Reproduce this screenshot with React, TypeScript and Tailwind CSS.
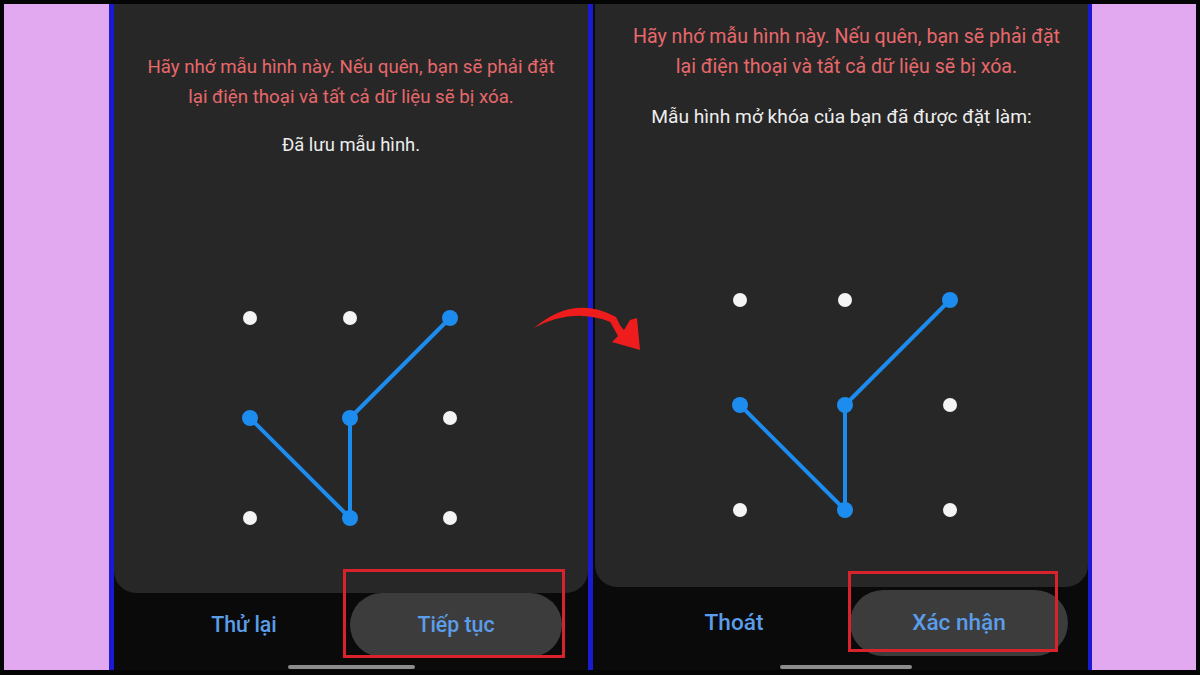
import React from "react";

type Pt = [number, number];

const FONT = { fontFamily: "Roboto, 'Noto Sans', Arial, sans-serif" };

function Pattern({ gap, size }: { gap: number; size: number }) {
  const o = 20;
  const pos = (c: number, r: number): Pt => [o + c * gap, o + r * gap];
  const path: Pt[] = [pos(0, 1), pos(1, 2), pos(1, 1), pos(2, 0)];
  const active = ["0-1", "1-2", "1-1", "2-0"];
  const dots: { key: string; p: Pt; on: boolean }[] = [];
  for (let r = 0; r < 3; r++) {
    for (let c = 0; c < 3; c++) {
      dots.push({ key: `${c}-${r}`, p: pos(c, r), on: active.includes(`${c}-${r}`) });
    }
  }
  return (
    <svg width={size} height={size} viewBox={`0 0 ${size} ${size}`}>
      <polyline
        points={path.map((p) => p.join(",")).join(" ")}
        fill="none"
        stroke="#1c8cef"
        strokeWidth={4}
        strokeLinejoin="round"
      />
      {dots.map((d) => (
        <circle
          key={d.key}
          cx={d.p[0]}
          cy={d.p[1]}
          r={d.on ? 8 : 7}
          fill={d.on ? "#1c8cef" : "#f4f4f4"}
        />
      ))}
    </svg>
  );
}

function HomeBar({ width, offset }: { width: string; offset: string }) {
  return (
    <div className={`flex justify-center ${offset}`}>
      <div className={`${width} h-[4px] rounded-full bg-[#8c8c8c]`} />
    </div>
  );
}

export default function App() {
  return (
    <div
      className="relative flex w-[1200px] h-[675px] overflow-hidden bg-[#050505] pt-[4px] pb-[5px] px-[4px]"
      style={FONT}
    >
      {/* left margin */}
      <div className="w-[105px] bg-[#e2a9f0]" />
      <div className="w-[5px] bg-[#1a1ad0]" />

      {/* left phone */}
      <div className="w-[474px] flex flex-col bg-[#0a0a0a]">
        <div className="h-[589px] rounded-b-[22px] bg-[#272727] flex flex-col items-center pt-[48px]">
          <p className="text-[18.7px] leading-[30px] text-[#e8686b] text-center">
            Hãy nhớ mẫu hình này. Nếu quên, bạn sẽ phải đặt
            <br />
            lại điện thoại và tất cả dữ liệu sẽ bị xóa.
          </p>
          <p className="mt-[18px] text-[18.4px] leading-[30px] text-[#ededed]">Đã lưu mẫu hình.</p>
          <div className="mt-[138px] mr-[3px]">
            <Pattern gap={100} size={240} />
          </div>
        </div>
        <div className="flex items-center h-[64px]">
          <div className="w-[236px] pl-[24px] flex justify-center">
            <span className="text-[21.3px] font-medium text-[#5b9de8]">Thử lại</span>
          </div>
          <div className="w-[212px] h-[64px] rounded-full bg-[#3c3c3c] flex items-center justify-center">
            <span className="text-[21.3px] font-medium text-[#5b9de8]">Tiếp tục</span>
          </div>
        </div>
        <div className="mt-[8px]">
          <HomeBar width="w-[127px]" offset="pl-0" />
        </div>
      </div>

      <div className="w-[5px] bg-[#1a1ad0]" />

      {/* right phone */}
      <div className="w-[495px] flex flex-col bg-[#0a0a0a]">
        <div className="h-[583px] ml-[2px] rounded-b-[22px] bg-[#272727] flex flex-col items-center pt-[18px]">
          <p className="ml-[10px] text-[19.6px] leading-[30px] text-[#e8686b] text-center">
            Hãy nhớ mẫu hình này. Nếu quên, bạn sẽ phải đặt
            <br />
            lại điện thoại và tất cả dữ liệu sẽ bị xóa.
          </p>
          <p className="mt-[20px] text-[19.2px] leading-[30px] text-[#ededed]">
            Mẫu hình mở khóa của bạn đã được đặt làm:
          </p>
          <div className="mt-[148px] ml-[6px]">
            <Pattern gap={105} size={250} />
          </div>
        </div>
        <div className="flex items-center h-[66px] mt-[3px]">
          <div className="w-[257px] pl-[25px] flex justify-center">
            <span className="text-[22.6px] font-medium text-[#5b9de8]">Thoát</span>
          </div>
          <div className="w-[218px] h-[66px] rounded-full bg-[#3c3c3c] flex items-center justify-center">
            <span className="text-[22.6px] font-medium text-[#5b9de8]">Xác nhận</span>
          </div>
        </div>
        <div className="mt-[9px]">
          <HomeBar width="w-[132px]" offset="pl-[11px]" />
        </div>
      </div>

      <div className="w-[4px] bg-[#1a1ad0]" />
      <div className="flex-1 bg-[#e2a9f0]" />

      {/* highlight boxes */}
      <div className="absolute left-[343px] top-[569px] w-[222px] h-[89px] border-[3px] border-[#d8222c]" />
      <div className="absolute left-[848px] top-[571px] w-[210px] h-[81px] border-[3px] border-[#d8222c]" />

      {/* arrow */}
      <svg className="absolute left-0 top-0" width={1200} height={675} viewBox="0 0 1200 675">
        <path
          d="M534 328 Q 574 294 616 317 L 621 327 Q 578 304 534 328 Z"
          fill="#ee1c1c"
        />
        <path d="M608 318 Q 618 322 624 330 L 630 320 L 637 318 L 640 350 L 612 342 L 618 336 Z" fill="#ee1c1c" />
      </svg>
    </div>
  );
}
